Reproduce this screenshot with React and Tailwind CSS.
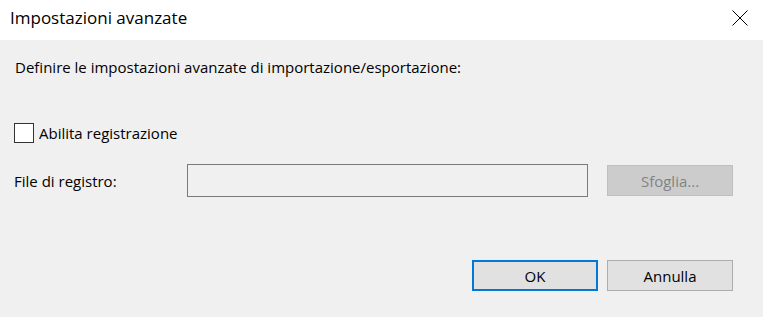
import React from "react";

export default function App() {
  return (
    <div
      className="w-[763px] h-[317px] bg-[#f0f0f0] flex flex-col text-black overflow-hidden"
      style={{ fontFamily: '"Open Sans", "Noto Sans", sans-serif' }}
    >
      <div className="h-[40px] bg-white flex justify-between pl-[10px] pr-[15px] shrink-0">
        <span className="pt-[8px] text-[17px] leading-[20px]">Impostazioni avanzate</span>
        <svg className="mt-[10px] w-[16px] h-[16px]" viewBox="0 0 16 16" fill="none">
          <path d="M0.5 0.5 L15.5 15.5 M15.5 0.5 L0.5 15.5" stroke="#000" strokeWidth="1" />
        </svg>
      </div>
      <div className="flex-1 flex flex-col pl-[14px] pr-[30px] text-[15px] leading-[20px]">
        <p className="mt-[17px] ml-[1px]">
          Definire le impostazioni avanzate di importazione/esportazione:
        </p>
        <label className="mt-[46px] flex items-center h-[20px] gap-[5px]">
          <span className="w-[20px] h-[20px] border border-[#333333] bg-white shrink-0" />
          <span>Abilita registrazione</span>
        </label>
        <div className="mt-[21px] flex items-center h-[33px]">
          <span className="w-[173px] shrink-0">File di registro:</span>
          <div className="w-[401px] h-[33px] border border-[#7a7a7a] bg-[#f0f0f0] shrink-0" />
          <div className="ml-[19px] w-[126px] h-[31px] bg-[#cccccc] border border-[#bfbfbf] text-[#838383] flex items-center justify-center shrink-0">
            Sfoglia...
          </div>
        </div>
        <div className="mt-[63px] flex justify-end gap-[9px]">
          <div className="w-[126px] h-[31px] bg-[#e1e1e1] border-2 border-[#0078d7] flex items-center justify-center">
            OK
          </div>
          <div className="w-[126px] h-[31px] bg-[#e1e1e1] border border-[#adadad] flex items-center justify-center">
            Annulla
          </div>
        </div>
      </div>
    </div>
  );
}
